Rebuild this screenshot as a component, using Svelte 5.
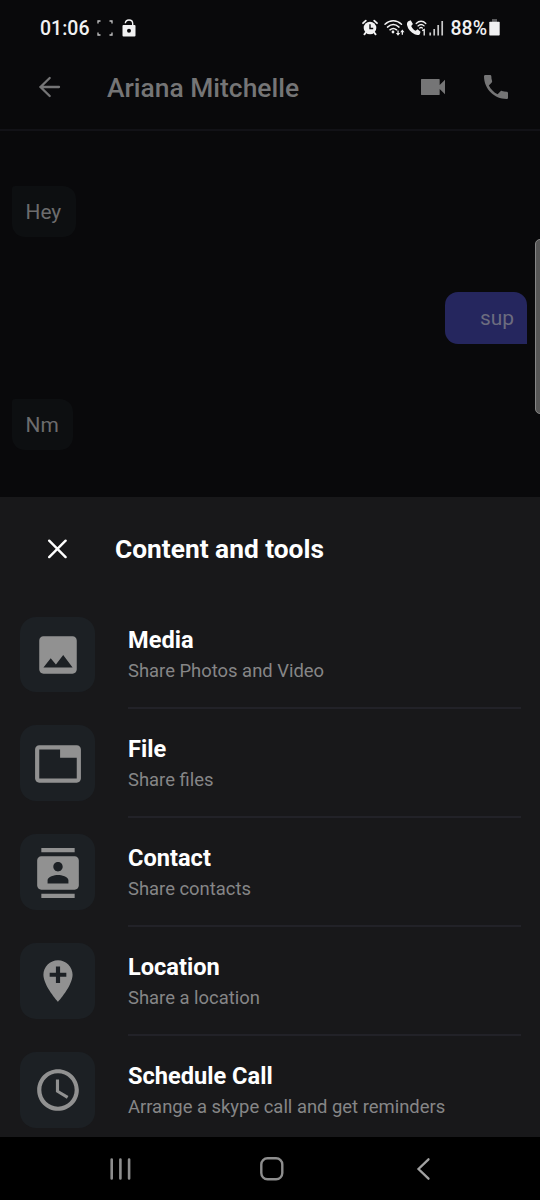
<script>
  const tools = [
    {
      title: 'Media', note: 'Share Photos and Video',
      icon: 'M21 19V5c0-1.1-.9-2-2-2H5c-1.1 0-2 .9-2 2v14c0 1.1.9 2 2 2h14c1.1 0 2-.9 2-2zM8.5 13.5l2.5 3.01L14.5 12l4.5 6H5l3.5-4.5z'
    },
    {
      title: 'File', note: 'Share files',
      icon: 'M21 3H3c-1.1 0-2 .9-2 2v14c0 1.1.9 2 2 2h18c1.1 0 2-.9 2-2V5c0-1.1-.9-2-2-2zm0 16H3V5h10v4h8v10z'
    },
    {
      title: 'Contact', note: 'Share contacts',
      icon: 'M20 0H4v2h16V0zM4 24h16v-2H4v2zM20 4H4c-1.1 0-2 .9-2 2v12c0 1.1.9 2 2 2h16c1.1 0 2-.9 2-2V6c0-1.1-.9-2-2-2zm-8 2.75c1.24 0 2.25 1.01 2.25 2.25s-1.01 2.25-2.25 2.25S9.75 10.24 9.75 9 10.76 6.75 12 6.75zM17 17H7v-1.5c0-1.67 3.33-2.5 5-2.5s5 .83 5 2.5V17z'
    },
    {
      title: 'Location', note: 'Share a location',
      icon: 'M12 2C8.14 2 5 5.14 5 9c0 5.25 7 13 7 13s7-7.75 7-13c0-3.86-3.14-7-7-7zm4 8h-3v3h-2v-3H8V8h3V5h2v3h3v2z'
    },
    {
      title: 'Schedule Call', note: 'Arrange a skype call and get reminders',
      icon: 'M11.99 2C6.47 2 2 6.48 2 12s4.47 10 9.99 10C17.52 22 22 17.52 22 12S17.52 2 11.99 2zM12 20c-4.42 0-8-3.58-8-8s3.58-8 8-8 8 3.58 8 8-3.58 8-8 8zm.5-13H11v6l5.25 3.15.75-1.23-4.5-2.67z'
    }
  ];
</script>

<div class="phone">
  <div class="status">
    <span class="time">01:06</span>
    <svg class="capture" width="16" height="16" viewBox="0 0 16 16" fill="none" stroke="#c4c4c5" stroke-width="1.3">
      <path d="M1 3.500V1h2.500M12.500 1H15v2.500M15 12.500V15h-2.500M3.500 15H1v-2.500" />
    </svg>
    <svg class="lock" width="14" height="18" viewBox="0 0 14 18">
      <path d="M3.300 4.200C3.500 2.300 5 1 7 1c2.200 0 3.700 1.500 3.700 3.600V7" fill="none" stroke="#f1f1f2" stroke-width="1.400" />
      <path fill="#f1f1f2" fill-rule="evenodd" d="M1.500 6h11q1 0 1 1v9.500q0 1-1 1h-11q-1 0-1-1V7q0-1 1-1zM7 9.800a2 2 0 1 0 0 4 2 2 0 0 0 0-4z" />
    </svg>
    <div class="indicators">
      <svg width="84" height="20" viewBox="0 0 84 20" class="signals">
        <g fill="none" stroke="#f1f1f2" stroke-linecap="round">
          <path d="M2 5.200l2.800-2.600M16 5.200l-2.800-2.600" stroke-width="1.800" />
          <path d="M4.800 14.500l-1.400 1.800M13.200 14.500l1.400 1.800" stroke-width="1.900" />
          <path d="M24 6.300c5-4.600 11.500-4.600 16.500 0M26.500 9.100c3.600-3.200 8-3.200 11.500 0M29 11.800c2.200-1.800 4.400-1.800 6.600 0" stroke-width="1.500" />
          <path d="M55.200 5.500c3-3 6.800-3 9.600 0M57 7.900c2-1.800 4.300-1.800 6.100 0M58.700 10.100c1-.8 1.800-.8 2.700 0" stroke-width="1.300" />
        </g>
        <circle cx="9" cy="10" r="6.300" fill="#f1f1f2" />
        <path d="M9 6.300v4.200h3.200" fill="none" stroke="#0a0a0c" stroke-width="1.400" />
        <circle cx="32" cy="14" r="1.400" fill="#f1f1f2" />
        <path fill="#f1f1f2" d="M36.400 12.500h1.300V15h1.500L37 17.800 34.900 15h1.500zM42 16.700v-2.500h1.500l-2.200-2.800-2.100 2.800h1.500v2.500z" />
        <path fill="#f1f1f2" d="M47.300 3.200l2.400-1 2.200 3.800-1.700 2c.9 2.200 2.300 3.800 4.400 4.800l2-1.500 2.900 2.500-.7 2.400c-1.100 1.200-3 1.200-5.200.1-4-2-6.500-4.800-7.500-9-.3-1.700 0-3 1.200-4.100z" />
        <path d="M61.200 12.600l2-1V17.500" fill="none" stroke="#f1f1f2" stroke-width="1.300" />
        <path d="M69.200 14.500v3M73.200 11v6.500M77.200 7v10.500M81.200 3v14.500" fill="none" stroke="#c9c9ca" stroke-width="1.700" />
      </svg>
      <span class="percent">88%</span>
      <svg class="battery" width="11" height="17" viewBox="0 0 11 17">
        <path d="M3 0h5v3H3z" fill="#5a5a5c" />
        <rect x="0.300" y="2.800" width="10.400" height="13.700" rx="0.800" fill="#f1f1f2" />
      </svg>
    </div>
  </div>

  <header>
    <svg class="back" width="24" height="24" viewBox="0 0 24 24" fill="none" stroke="#757576" stroke-width="2.300" stroke-linecap="round">
      <path d="M22 12H3.500M12.700 3L3.500 12l9.200 9" />
    </svg>
    <h1>Ariana Mitchelle</h1>
    <svg class="video" width="32" height="32" viewBox="0 0 24 24" fill="#757576">
      <path d="M17 10.500V6.300q0-.3-.3-.3H3.300q-.3 0-.3.300v11.400q0 .3.300.3h13.400q.3 0 .3-.3v-4.200l4 4v-11l-4 4z" />
    </svg>
    <svg class="call" width="32" height="32" viewBox="0 0 24 24" fill="#757576">
      <path d="M6.620 10.790c1.440 2.830 3.760 5.140 6.590 6.590l2.200-2.200c.27-.27.67-.36 1.020-.24 1.120.37 2.330.57 3.570.57.55 0 1 .45 1 1V20c0 .55-.45 1-1 1-9.390 0-17-7.610-17-17 0-.55.45-1 1-1h3.500c.55 0 1 .45 1 1 0 1.250.2 2.450.57 3.570.11.35.03.74-.25 1.020l-2.200 2.200z" />
    </svg>
  </header>

  <main>
    <p class="bubble hey">Hey</p>
    <p class="bubble mine">sup</p>
    <p class="bubble nm">Nm</p>
    <div class="edge"></div>
  </main>

  <section>
    <div class="sheet-head">
      <svg width="20" height="20" viewBox="0 0 20 20" fill="none" stroke="#fff" stroke-width="2.400" stroke-linecap="round">
        <path d="M2.200 1.700l16.400 16.400M18.600 1.700L2.200 18.100" />
      </svg>
      <h2>Content and tools</h2>
    </div>
    <ul>
      {#each tools as tool}
        <li>
          <div class="tile">
            <svg width="50" height="50" viewBox="0 0 24 24" fill="#919191"><path d={tool.icon} /></svg>
          </div>
          <div class="label">
            <h3>{tool.title}</h3>
            <p>{tool.note}</p>
          </div>
        </li>
      {/each}
    </ul>
  </section>

  <nav>
    <svg width="24" height="24" viewBox="0 0 24 24" fill="none" stroke="#8e8e8e" stroke-width="2.600" stroke-linecap="round">
      <path d="M3.700 2.500v19M12.400 2.500v19M21.100 2.500v19" />
    </svg>
    <svg width="24" height="24" viewBox="0 0 24 24" fill="none" stroke="#8e8e8e" stroke-width="2.400">
      <rect x="1.300" y="1.300" width="21" height="21" rx="6.200" />
    </svg>
    <svg width="24" height="24" viewBox="0 0 24 24" fill="none" stroke="#a2a2a2" stroke-width="2.300" stroke-linecap="round">
      <path d="M17.500 2.300L7.500 12l10 9.700" />
    </svg>
  </nav>
</div>

<style>
  :global(body) { margin: 0; background: #000; }
  .phone {
    width: 540px; height: 1200px; overflow: hidden;
    display: flex; flex-direction: column;
    background: #09090b; color: #fff;
    font-family: Roboto, sans-serif;
  }
  h1, h2, h3, p, ul { margin: 0; padding: 0; }
  svg { display: block; flex: none; }
  .status {
    flex: none; height: 56px; box-sizing: border-box;
    padding: 0 40px 0 40px; display: flex; align-items: center;
  }
  .time { font-size: 19.500px; font-weight: 500; color: #f1f1f2; width: 57px; white-space: nowrap; }
  .lock { margin-left: 8.500px; margin-top: -1px; }
  .indicators { margin-left: auto; display: flex; align-items: center; }
  .signals { margin-right: 5px; margin-top: -1px; }
  .percent { font-size: 19.500px; font-weight: 500; color: #f1f1f2; }
  .battery { margin-left: 2px; margin-top: -1px; }
  header {
    flex: none; height: 75px; box-sizing: border-box;
    border-bottom: 2px solid #121217;
    padding: 0 28px 11px 37px; display: flex; align-items: center;
  }
  h1 { font-size: 26.400px; font-weight: 500; line-height: 30px; color: #757576; margin-left: 46px; flex: 1; padding-top: 2px; }
  .call { margin-left: 31px; }
  main { flex: none; height: 366px; position: relative; display: flex; flex-direction: column; align-items: flex-start; }
  .bubble {
    box-sizing: border-box; height: 51px; line-height: 53px; flex: none;
    font-size: 20.900px; color: #6c6c6d;
    background: #0d0f11; border-radius: 3px 13px 13px 13px; padding-left: 13.500px;
  }
  .hey { width: 64px; margin: 55px 0 0 12px; }
  .mine {
    width: 82px; margin: 55px 13px 0 0; align-self: flex-end; text-align: right;
    padding: 0 13px 0 0; background: #25265e; color: #6c6c7f; border-radius: 13px 13px 0 13px; height: 52px;
  }
  .nm { width: 61px; margin: 55px 0 0 12px; }
  .edge {
    position: absolute; right: -6px; top: 108px; width: 9px; height: 173px;
    background: #565656; border: 1px solid #868686; border-radius: 5px;
  }
  section { flex: 1; background: #18181a; min-height: 0; overflow: hidden; }
  .sheet-head { height: 104px; display: flex; align-items: center; padding-left: 47px; }
  h2 { font-size: 26.300px; line-height: 30px; font-weight: 700; margin-left: 48px; }
  ul { list-style: none; padding: 0 19.500px; margin-top: 2px; }
  li { height: 108.900px; display: flex; }
  .tile {
    width: 75.500px; height: 75.500px; margin-top: 13.500px; flex: none; border-radius: 16px;
    background: #1c2024; display: flex; align-items: center; justify-content: center;
  }
  .tile svg { margin: 1px 0 0 1px; }
  .label { flex: 1; margin-left: 33px; border-bottom: 2px solid #222228; padding-top: 23.400px; box-sizing: border-box; height: 106px; }
  h3 { font-size: 23.600px; line-height: 28px; font-weight: 700; }
  .label p { font-size: 18.420px; line-height: 24px; color: #868687; margin-top: 5px; white-space: nowrap; }
  nav {
    flex: none; height: 63px; background: #000; display: flex; align-items: center;
    justify-content: space-between; padding: 0 105px 0 108px; box-sizing: border-box;
  }
</style>
